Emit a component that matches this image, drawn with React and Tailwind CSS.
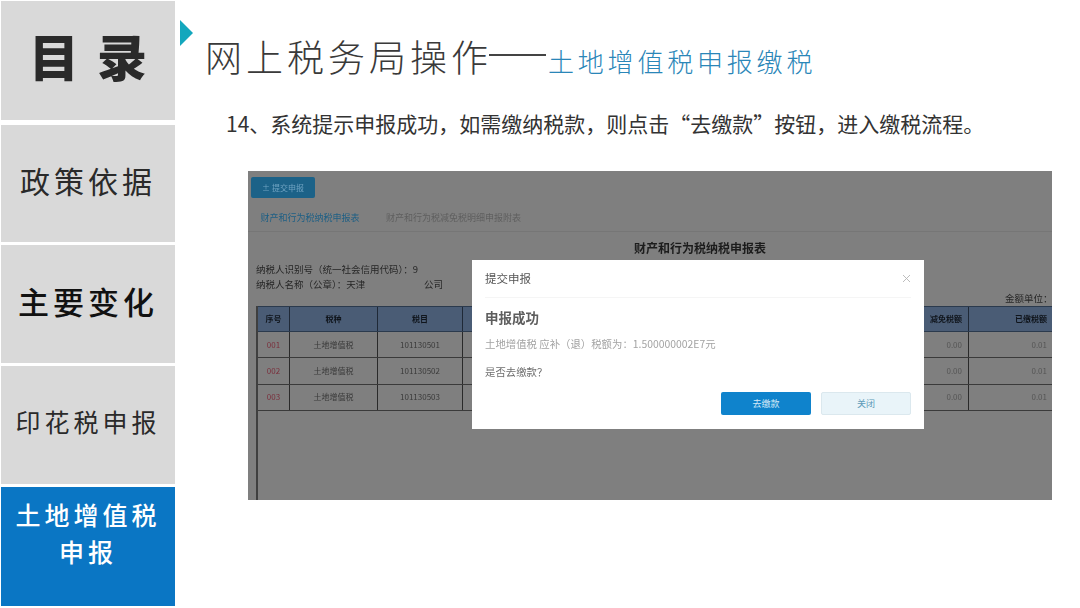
const cjk = { fontFamily: '"Noto Sans CJK SC", sans-serif' };

function Nav({ h, mb, active, children, text }) {
  return (
    <div
      className={`flex items-center justify-center text-center ${h} ${mb} ${active ? "bg-[#0a76c4] text-white" : "bg-[#d9d9d9] text-[#2a2a2a]"} ${text}`}
    >
      {children}
    </div>
  );
}

const rows = [
  ["001", "土地增值税", "101130501", "0.00", "0.01"],
  ["002", "土地增值税", "101130502", "0.00", "0.01"],
  ["003", "土地增值税", "101130503", "0.00", "0.01"],
];

const grid = "grid grid-cols-[32px_88px_85px_1fr_80px_83px]";

function Table() {
  return (
    <div className="mt-[1px] ml-[8px] flex-1 border-l-2 border-[#3f3f3f] overflow-hidden">
      <div className={`${grid} h-[26px] bg-[#4a5c75] border-y border-[#2b3a4d] text-[8px] font-bold text-[#10151c]`}>
        <div className="flex items-center justify-center border-r border-[#1f2937]">序号</div>
        <div className="flex items-center justify-center border-r border-[#1f2937]">税种</div>
        <div className="flex items-center justify-center border-r border-[#1f2937]">税目</div>
        <div className="border-r border-[#1f2937]"></div>
        <div className="flex items-center justify-end pr-[6px] border-r border-[#1f2937]">减免税额</div>
        <div className="flex items-center justify-end pr-[5px]">已缴税额</div>
      </div>
      {rows.map((r) => (
        <div key={r[0]} className={`${grid} h-[26.3px] border-b border-[#3a3a3a] text-[8px] text-[#3a3a3a]`}>
          <div className="flex items-center justify-center border-r border-[#2a2a2a] text-[#7a2f3c]">{r[0]}</div>
          <div className="flex items-center justify-center border-r border-[#2a2a2a]">{r[1]}</div>
          <div className="flex items-center justify-center border-r border-[#2a2a2a]">{r[2]}</div>
          <div className="border-r border-[#2a2a2a]"></div>
          <div className="flex items-center justify-end pr-[6px] border-r border-[#2a2a2a] text-[#555555]">{r[3]}</div>
          <div className="flex items-center justify-end pr-[5px] text-[#555555]">{r[4]}</div>
        </div>
      ))}
    </div>
  );
}

function Shot() {
  return (
    <div className="relative ml-[73px] mt-[33px] h-[329px] w-[804px] bg-[#7f7f7f]">
      <div className="flex h-full flex-col overflow-hidden blur-[0.5px]">
        <div className="px-[3px] pt-[6px]">
          <div className="flex h-[21px] w-[64px] items-center justify-center rounded-[2px] bg-[#1c6288] text-[8px] text-[#6fa3c2]">
            ± 提交申报
          </div>
        </div>
        <div className="mt-[7px] flex h-[27px] items-center border-b border-[#767676] pl-[3px] text-[9px]">
          <div className="flex h-full w-[118px] items-center justify-center text-[#1d5f85]">财产和行为税纳税申报表</div>
          <div className="ml-[17px] text-[#5f5f5f]">财产和行为税减免税明细申报附表</div>
        </div>
        <div className="mt-[8px] pl-[100px] text-center text-[12px] font-bold leading-[16px] text-[#1c1c1c]">
          财产和行为税纳税申报表
        </div>
        <div className="mt-[6px] pl-[8px] text-[9.5px] leading-[15px] text-[#262626]">
          <div>纳税人识别号（统一社会信用代码）：9</div>
          <div className="flex">
            <span className="w-[168px]">纳税人名称（公章）：天津</span>
            <span>公司</span>
          </div>
        </div>
        <div className="-mt-[1px] ml-[757px] h-[14px] whitespace-nowrap text-[9.5px] leading-[14px] text-[#262626]">金额单位：</div>
        <Table />
      </div>

      <div className="absolute left-[224px] top-[89px] flex h-[169px] w-[452px] flex-col bg-white pl-[13px] pr-[13px] text-[#666666]">
        <div className="flex h-[38px] items-center justify-between border-b border-[#f5f5f5]">
          <span className="text-[11.5px] text-[#555555] blur-[0.3px]">提交申报</span>
          <svg width="9" height="9" viewBox="0 0 9 9">
            <path d="M1 1l7 7M8 1L1 8" stroke="#b5b5b5" strokeWidth="0.9" fill="none" />
          </svg>
        </div>
        <div className="mt-[9px] text-[13.5px] font-bold leading-[20px] text-[#5e5e5e] blur-[0.3px]">申报成功</div>
        <div className="mt-[10px] text-[10.4px] leading-[14px] text-[#a3a3a3] blur-[0.3px]">土地增值税 应补（退）税额为：1.500000002E7元</div>
        <div className="mt-[14px] text-[10.4px] leading-[14px] text-[#6f6f6f] blur-[0.3px]">是否去缴款？</div>
        <div className="mt-[13px] flex justify-end gap-[10px]">
          <div className="flex h-[23px] w-[90px] items-center justify-center rounded-[2px] bg-[#0f83cc] text-[9px] text-[#d5eaf7]">去缴款</div>
          <div className="flex h-[23px] w-[90px] items-center justify-center rounded-[2px] border border-[#dbe8ee] bg-[#e9f4f9] text-[9px] text-[#5c9ab8]">关闭</div>
        </div>
      </div>
    </div>
  );
}

export default function App() {
  return (
    <div className="flex h-[608px] w-[1080px] overflow-hidden bg-white" style={cjk}>
      <div className="ml-[1px] mt-[1px] flex w-[174px] shrink-0 flex-col">
        <Nav h="h-[119px]" mb="mb-[5px]" text="pb-[10px] pl-[18px] text-[50px] font-black tracking-[18px] text-[#1a1a1a]">目录</Nav>
        <Nav h="h-[117px]" mb="mb-[3px]" text="pb-[6px] text-[30px] font-normal tracking-[4px]">政策依据</Nav>
        <Nav h="h-[118px]" mb="mb-[3px]" text="pb-[6px] text-[31px] font-medium tracking-[4px] text-[#111111]">主要变化</Nav>
        <Nav h="h-[118px]" mb="mb-[3px]" text="pb-[6px] text-[25px] font-normal tracking-[4px]">印花税申报</Nav>
        <Nav h="h-[119px]" mb="" active text="items-start pt-[9px] text-[25px] font-medium leading-[37px] tracking-[4px]">
          <span className="w-[160px]">土地增值税 申报</span>
        </Nav>
      </div>
      <div className="flex min-w-0 flex-1 flex-col">
        <div className="flex items-start">
          <div className="ml-[5px] mt-[20px] h-0 w-0 border-y-[13px] border-l-[13px] border-y-transparent border-l-[#13a7bd]"></div>
          <div className="ml-[12px] mt-[31px] flex items-end whitespace-nowrap">
            <span className="text-[37px] font-light leading-[50px] tracking-[4px] text-[#3a3a3a]">网上税务局操作</span>
            <span className="mb-[25px] ml-[-3px] h-[2px] w-[57px] bg-[#444444]"></span>
            <span className="mb-[1px] ml-[2px] text-[26px] font-light leading-[38px] tracking-[3.8px] text-[#2a86b8]">土地增值税申报缴税</span>
          </div>
        </div>
        <div className="ml-[51px] mt-[27px] whitespace-nowrap text-[21px] leading-[30px] text-[#333333]">
          14、系统提示申报成功，如需缴纳税款，则点击“去缴款”按钮，进入缴税流程。
        </div>
        <Shot />
      </div>
    </div>
  );
}
